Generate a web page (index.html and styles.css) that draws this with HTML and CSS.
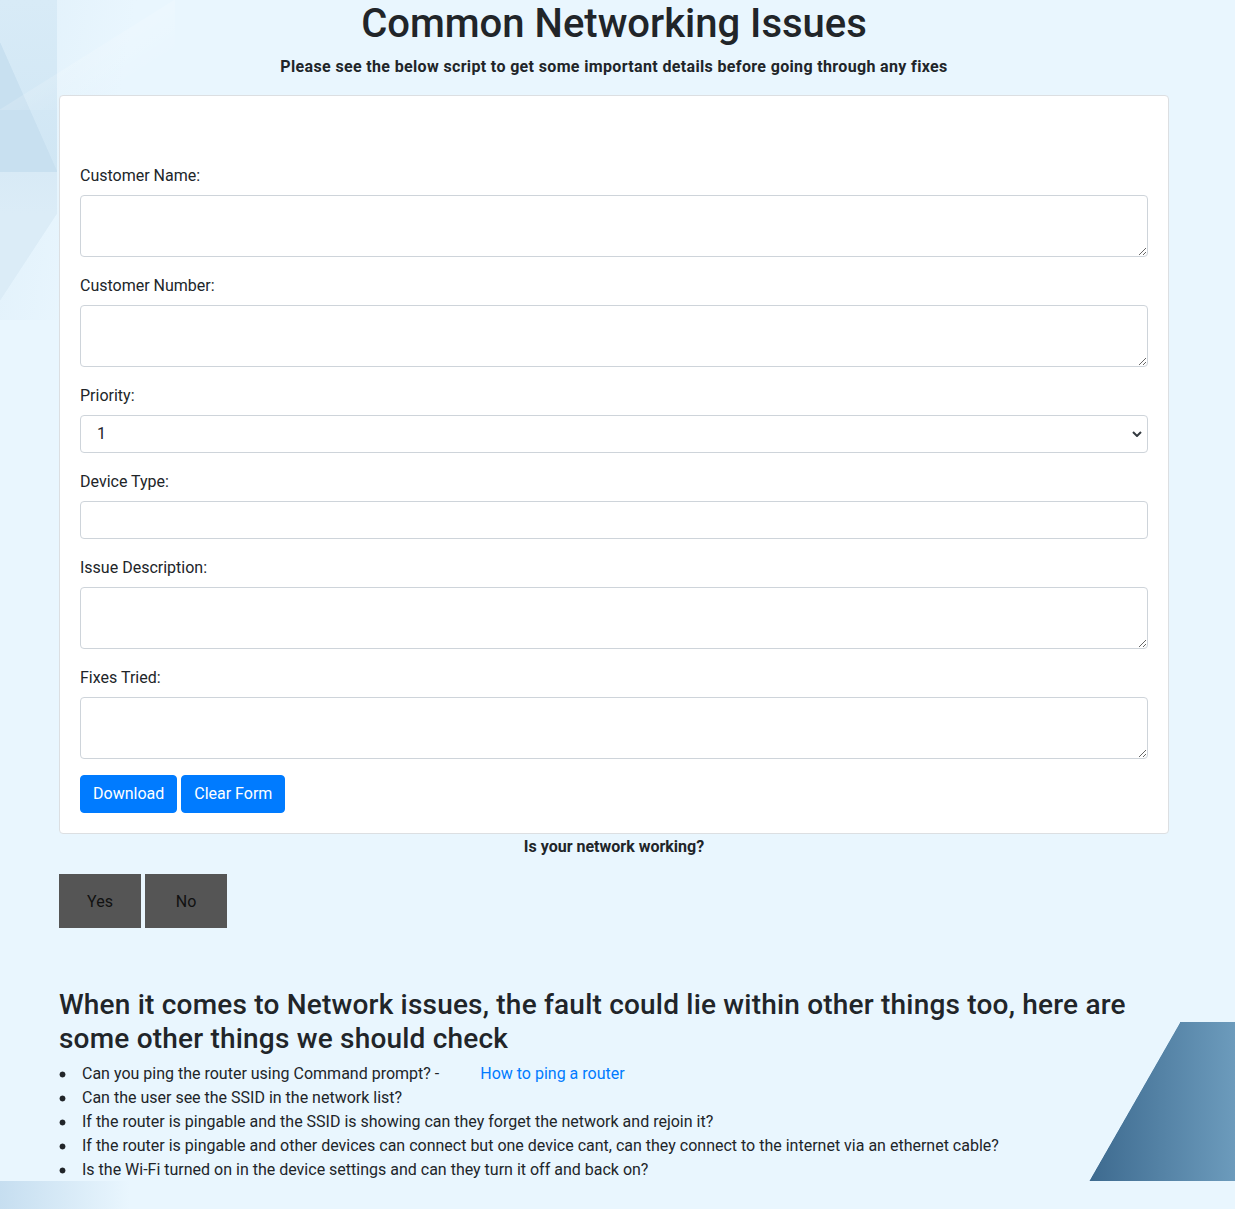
FILE: index.html
```html
<!DOCTYPE html>
<html lang="en">
<head>
<meta charset="utf-8">
<title>Common Networking Issues</title>
<link rel="stylesheet" href="styles.css">
</head>
<body>
<div class="page">
  <h1 class="title">Common Networking Issues</h1>
  <h6 class="subtitle">Please see the below script to get some important details before going through any fixes</h6>

  <div class="card">
    <form class="card-body">
      <div class="form-group">
        <label for="cname">Customer Name:</label>
        <textarea id="cname" class="control area" rows="2"></textarea>
      </div>
      <div class="form-group">
        <label for="cnum">Customer Number:</label>
        <textarea id="cnum" class="control area" rows="2"></textarea>
      </div>
      <div class="form-group">
        <label for="prio">Priority:</label>
        <select id="prio" class="control select">
          <option>1</option>
          <option>2</option>
          <option>3</option>
        </select>
      </div>
      <div class="form-group">
        <label for="dtype">Device Type:</label>
        <input id="dtype" class="control line" type="text">
      </div>
      <div class="form-group">
        <label for="idesc">Issue Description:</label>
        <textarea id="idesc" class="control area" rows="2"></textarea>
      </div>
      <div class="form-group">
        <label for="fixes">Fixes Tried:</label>
        <textarea id="fixes" class="control area" rows="2"></textarea>
      </div>
      <div class="actions">
        <button type="button" class="btn">Download</button>
        <button type="button" class="btn">Clear Form</button>
      </div>
    </form>
  </div>

  <p class="question">Is your network working?</p>
  <div class="yn">
    <button type="button" class="yn-btn">Yes</button>
    <button type="button" class="yn-btn">No</button>
  </div>

  <h3 class="checks-title">When it comes to Network issues, the fault could lie within other things too, here are some other things we should check</h3>
  <ul class="checks">
    <li>Can you ping the router using Command prompt? - <a class="link" href="#">How to ping a router</a></li>
    <li>Can the user see the SSID in the network list?</li>
    <li>If the router is pingable and the SSID is showing can they forget the network and rejoin it?</li>
    <li>If the router is pingable and other devices can connect but one device cant, can they connect to the internet via an ethernet cable?</li>
    <li>Is the Wi-Fi turned on in the device settings and can they turn it off and back on?</li>
  </ul>
</div>
</body>
</html>
```

FILE: styles.css
```css
html, body {
  margin: 0;
  padding: 0;
}

body {
  min-height: 1209px;
  font-family: "Segoe UI", Roboto, "Liberation Sans", sans-serif;
  font-size: 16px;
  line-height: 24px;
  color: #212529;
  background-color: #e9f6fe;
  background-image:
    /* bottom-right trapezoid: cover triangle */
    linear-gradient(to bottom right, #e9f6fe 50%, rgba(233,246,254,0) 50.5%),
    /* bottom-right trapezoid: fill */
    linear-gradient(to right, #3d6a8f, #6c9bbc),
    /* bottom-left strip */
    linear-gradient(to right, #c6def0, rgba(233,246,254,0)),
    /* top-left: faint diagonal sheen */
    linear-gradient(to bottom right, rgba(255,255,255,0) 49.5%, rgba(255,255,255,0.15) 50%, rgba(255,255,255,0) 75%),
    /* top-left darker triangle */
    linear-gradient(to top right, #c8e0f0 50%, rgba(200,224,240,0) 50.8%),
    /* top-left block */
    linear-gradient(to bottom, #d8ebf7, #d0e6f4),
    /* lower left: triangle part */
    linear-gradient(to bottom right, #dbecf7 50%, rgba(219,236,247,0) 50.8%),
    /* lower left: rect part */
    linear-gradient(to bottom, #d8eaf6, #dbecf7),
    /* faint wide wash */
    linear-gradient(100deg, #e0f0fa 0%, #e9f6fe 30%);
  background-repeat: no-repeat;
  background-position:
    1089px 1022px,
    1089px 1022px,
    0 1181px,
    0 0,
    0 43px,
    0 0,
    0 213px,
    0 172px,
    0 0;
  background-size:
    91px 159px,
    146px 159px,
    130px 28px,
    175px 110px,
    57px 129px,
    57px 172px,
    57px 87px,
    57px 41px,
    400px 320px;
}

.page {
  width: 1110px;
  margin-left: 59px;
  padding-bottom: 20px;
}

.title {
  margin: 0;
  font-size: 40px;
  font-weight: 500;
  line-height: 48px;
  text-align: center;
  color: #212529;
}

.subtitle {
  margin: 8px 0 19px;
  padding-top: 1px;
  font-size: 16px;
  font-weight: 700;
  line-height: 19px;
  letter-spacing: 0.35px;
  text-align: center;
  color: #212529;
}

.card {
  background: #fff;
  border: 1px solid #dcdfe2;
  border-radius: 4px;
}

.card-body {
  margin: 0;
  padding: 67px 20px 20px;
}

.form-group {
  margin-bottom: 16px;
}

.form-group label {
  display: block;
  margin-bottom: 8px;
  padding-top: 1px;
  font-size: 16px;
  line-height: 23px;
  color: #212529;
}

.control {
  display: block;
  box-sizing: border-box;
  width: 100%;
  margin: 0;
  padding: 6px 12px;
  font-family: inherit;
  font-size: 16px;
  line-height: 24px;
  color: #495057;
  background-color: #fff;
  border: 1px solid #ced4da;
  border-radius: 4px;
}

.area {
  height: 62px;
  resize: vertical;
}

.line {
  height: 38px;
}

.select {
  height: 38px;
  padding-left: 16px;
  -webkit-appearance: none;
  appearance: none;
  color: #212529;
  background-image: url("data:image/svg+xml;utf8,<svg xmlns='http://www.w3.org/2000/svg' width='10' height='6' viewBox='0 0 10 6'><path d='M1 1l4 4 4-4' fill='none' stroke='%23343a40' stroke-width='2'/></svg>");
  background-repeat: no-repeat;
  background-position: right 5px center;
  background-size: 10px 6px;
}

.actions {
  display: flex;
  gap: 4px;
}

.btn {
  padding: 6px 12px;
  font-family: inherit;
  font-size: 16px;
  line-height: 24px;
  color: #fff;
  background-color: #007bff;
  border: 1px solid #007bff;
  border-radius: 4px;
  cursor: pointer;
}

.question {
  margin: 0;
  padding-top: 1px;
  font-weight: 700;
  line-height: 23px;
  text-align: center;
}

.yn {
  display: flex;
  gap: 4px;
  margin-top: 16px;
}

.yn-btn {
  width: 82px;
  height: 54px;
  padding: 0;
  font-family: inherit;
  font-size: 16px;
  color: #111;
  background-color: #555;
  border: none;
  border-radius: 0;
}

.checks-title {
  margin: 60px 0 7px;
  font-size: 28px;
  font-weight: 500;
  line-height: 1.2;
  letter-spacing: 0.2px;
  color: #212529;
}

.checks {
  margin: 0;
  padding: 0;
  list-style: none;
  line-height: 24px;
}

.checks li {
  padding-left: 23px;
  background-image: radial-gradient(circle, #212529 2.6px, rgba(33,37,41,0) 3.3px);
  background-repeat: no-repeat;
  background-position: 0 9px;
  background-size: 7px 7px;
}

.link {
  margin-left: 37px;
  color: #007bff;
  text-decoration: none;
}
```
